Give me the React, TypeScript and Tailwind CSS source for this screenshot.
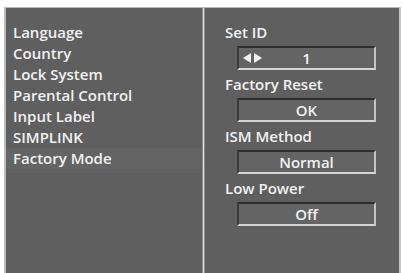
import React from "react";

const font = { fontFamily: '"Open Sans", "DejaVu Sans", sans-serif' };

function ValueBox({ children, arrows }: { children: React.ReactNode; arrows?: boolean }) {
  return (
    <div className="relative mt-[3px] ml-[12px] flex h-[24px] w-[139px] items-center justify-center border-t-2 border-l-2 border-b-2 border-r-2 border-t-[#2e2e2e] border-l-[#3a3a3a] border-b-[#d4d4d4] border-r-[#c4c4c4] bg-[#646464]">
      {arrows && (
        <svg className="absolute left-[4px] top-[5px]" width="20" height="10" viewBox="0 0 20 10">
          <polygon points="0,5 8,0 8,10" fill="#f2f2f2" />
          <polygon points="19,5 11,0 11,10" fill="#f2f2f2" />
        </svg>
      )}
      <span className="text-[15px] font-semibold leading-none text-[#f2f2f2]">{children}</span>
    </div>
  );
}

export default function App() {
  const left = ["Language", "Country", "Lock System", "Parental Control", "Input Label", "SIMPLINK", "Factory Mode"];
  const right: { label: string; value: string; arrows?: boolean }[] = [
    { label: "Set ID", value: "1", arrows: true },
    { label: "Factory Reset", value: "OK" },
    { label: "ISM Method", value: "Normal" },
    { label: "Low Power", value: "Off" },
  ];
  return (
    <div className="h-[273px] w-[403px] overflow-hidden bg-white pt-[7px] pl-[4px] pr-[2px]" style={font}>
      <div className="flex h-[266px] w-[397px] border-t border-l-2 border-r-2 border-t-[#b8b8b8] border-l-[#bdbdbd] border-r-[#c8c8c8] bg-[#5f5f5f]">
        <div className="flex w-[196px] flex-col pt-[14px]">
          {left.map((t) => (
            <div
              key={t}
              className={`pl-[7px] text-[15px] font-semibold leading-[21px] text-[#f2f2f2] ${t === "Factory Mode" ? "bg-[#646464]" : ""}`}
            >
              {t}
            </div>
          ))}
        </div>
        <div className="w-[3px] border-l border-r border-l-[#8a8a8a] border-r-[#8a8a8a] bg-[#e2e2e2]" />
        <div className="flex flex-1 flex-col pt-[14px] pl-[20px]">
          {right.map((r) => (
            <div key={r.label} className="mb-[4px] flex flex-col">
              <div className="text-[15px] font-semibold leading-[21px] text-[#f2f2f2]">{r.label}</div>
              <ValueBox arrows={r.arrows}>{r.value}</ValueBox>
            </div>
          ))}
        </div>
      </div>
    </div>
  );
}
